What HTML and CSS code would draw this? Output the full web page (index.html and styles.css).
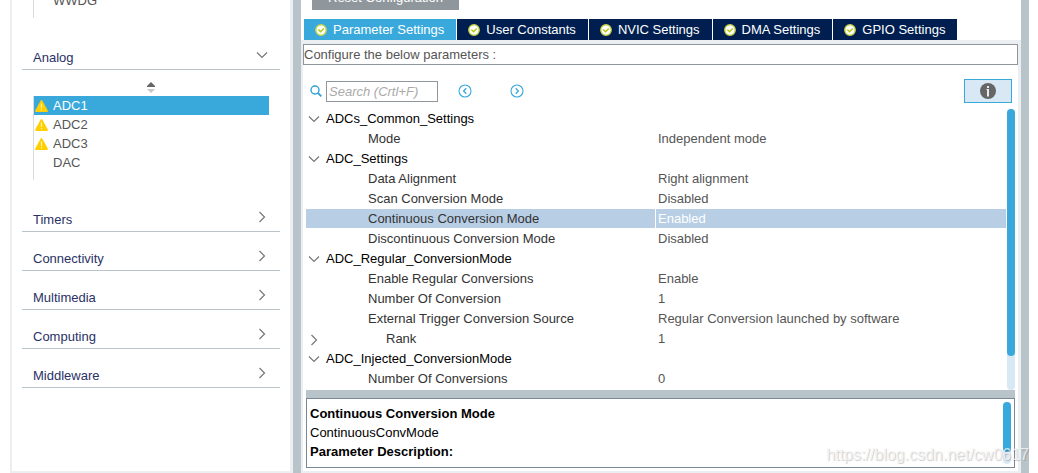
FILE: index.html
```html
<!DOCTYPE html>
<html lang="en">
<head>
<meta charset="utf-8">
<title>ADC1 Configuration</title>
<link rel="stylesheet" href="styles.css">
</head>
<body>
<svg class="defs" aria-hidden="true">
  <symbol id="down" viewBox="0 0 12 8"><path d="M1 1.5 6 6.5 11 1.5" fill="none" stroke="#777" stroke-width="1.2"/></symbol>
  <symbol id="right" viewBox="0 0 8 12"><path d="M1.5 1 6.5 6 1.5 11" fill="none" stroke="#777" stroke-width="1.2"/></symbol>
  <symbol id="check" viewBox="0 0 12 12"><circle cx="6" cy="6" r="5.2" fill="#fff" stroke="#c6d44a" stroke-width="1.4"/><path d="M3.3 5.5 5.6 7.8 8.8 4.6" fill="none" stroke="#b5c80e" stroke-width="1.4"/></symbol>
  <symbol id="warn" viewBox="0 0 13 12"><path d="M6.5 1 12 11H1Z" fill="#ffcf00" stroke="#ffcf00" stroke-width="1.8" stroke-linejoin="round"/><path d="M6.5 3.5V8M6.5 9V10.3" stroke="#fff3b8" stroke-width="1.2"/></symbol>
</svg>
<div class="app">
  <nav class="sidebar">
    <ul class="tree tree-top"><li>WWDG</li></ul>
    <button class="category category-open">Analog<svg width="12" height="8"><use href="#down"/></svg></button>
    <div class="sorter"><svg width="8" height="11" viewBox="0 0 8 11"><path d="M0 4 4 0 8 4V5H0Z" fill="#666"/><path d="M0 7H8L4 11Z" fill="#c8c8c8"/></svg></div>
    <ul class="tree tree-analog">
      <li class="selected"><svg width="13" height="12"><use href="#warn"/></svg>ADC1</li>
      <li><svg width="13" height="12"><use href="#warn"/></svg>ADC2</li>
      <li><svg width="13" height="12"><use href="#warn"/></svg>ADC3</li>
      <li>DAC</li>
    </ul>
    <div class="categories">
      <button class="category">Timers<svg width="8" height="12"><use href="#right"/></svg></button>
      <button class="category">Connectivity<svg width="8" height="12"><use href="#right"/></svg></button>
      <button class="category">Multimedia<svg width="8" height="12"><use href="#right"/></svg></button>
      <button class="category">Computing<svg width="8" height="12"><use href="#right"/></svg></button>
      <button class="category">Middleware<svg width="8" height="12"><use href="#right"/></svg></button>
    </div>
  </nav>
  <div class="divider"></div>
  <main class="main">
    <button class="reset">Reset Configuration</button>
    <div class="tabs" role="tablist">
      <button class="tab active" role="tab" aria-selected="true"><svg width="12" height="12"><use href="#check"/></svg>Parameter Settings</button>
      <button class="tab" role="tab"><svg width="12" height="12"><use href="#check"/></svg>User Constants</button>
      <button class="tab" role="tab"><svg width="12" height="12"><use href="#check"/></svg>NVIC Settings</button>
      <button class="tab" role="tab"><svg width="12" height="12"><use href="#check"/></svg>DMA Settings</button>
      <button class="tab" role="tab"><svg width="12" height="12"><use href="#check"/></svg>GPIO Settings</button>
    </div>
    <section class="panel">
      <div class="hint">Configure the below parameters :</div>
      <div class="toolbar">
        <label class="search" for="search" aria-label="Search"><svg width="12" height="12" viewBox="0 0 12 12" fill="none" stroke="#2fa3d8"><circle cx="5" cy="5" r="4" stroke-width="1.4"/><path d="M8 8 11.3 11.3" stroke-width="1.8"/></svg></label>
        <input id="search" type="text" placeholder="Search (Crtl+F)">
        <button class="nav" aria-label="Previous"><svg width="14" height="14" viewBox="0 0 14 14" fill="none" stroke="#39a9dc"><circle cx="7" cy="7" r="6" stroke-width="1.1"/><path d="M8.3 4.3 5.6 7 8.3 9.7" stroke-width="1.3"/></svg></button>
        <button class="nav" aria-label="Next"><svg width="14" height="14" viewBox="0 0 14 14" fill="none" stroke="#39a9dc"><circle cx="7" cy="7" r="6" stroke-width="1.1"/><path d="M5.7 4.3 8.4 7 5.7 9.7" stroke-width="1.3"/></svg></button>
        <button class="info" aria-label="Information"><svg width="16" height="16" viewBox="0 0 16 16"><circle cx="8" cy="8" r="8" fill="#666"/><path d="M7 3H9V5H7ZM6.5 6H9V13.5H7V7H6.5Z" fill="#e8eef3"/></svg></button>
      </div>
      <div class="params">
        <table>
          <colgroup><col class="name-col"><col></colgroup>
          <tbody>
          <tr class="group"><th colspan="2"><svg width="12" height="8"><use href="#down"/></svg>ADCs_Common_Settings</th></tr>
          <tr><td>Mode</td><td>Independent mode</td></tr>
          <tr class="group"><th colspan="2"><svg width="12" height="8"><use href="#down"/></svg>ADC_Settings</th></tr>
          <tr><td>Data Alignment</td><td>Right alignment</td></tr>
          <tr><td>Scan Conversion Mode</td><td>Disabled</td></tr>
          <tr class="selected"><td>Continuous Conversion Mode</td><td>Enabled</td></tr>
          <tr><td>Discontinuous Conversion Mode</td><td>Disabled</td></tr>
          <tr class="group"><th colspan="2"><svg width="12" height="8"><use href="#down"/></svg>ADC_Regular_ConversionMode</th></tr>
          <tr><td>Enable Regular Conversions</td><td>Enable</td></tr>
          <tr><td>Number Of Conversion</td><td>1</td></tr>
          <tr><td>External Trigger Conversion Source</td><td>Regular Conversion launched by software</td></tr>
          <tr class="nested"><td><svg width="12" height="12"><use href="#right"/></svg>Rank</td><td>1</td></tr>
          <tr class="group"><th colspan="2"><svg width="12" height="8"><use href="#down"/></svg>ADC_Injected_ConversionMode</th></tr>
          <tr><td>Number Of Conversions</td><td>0</td></tr>
          </tbody>
        </table>
        <div class="track"><div class="thumb thumb-params"></div></div>
      </div>
      <div class="splitter"></div>
      <div class="description">
        <div class="description-text"><b>Continuous Conversion Mode</b><br>ContinuousConvMode<br><b>Parameter Description:</b></div>
        <div class="track"><div class="thumb thumb-description"></div></div>
      </div>
    </section>
  </main>
  <div class="divider"></div>
  <div class="watermark">https://blog.csdn.net/cw0617</div>
</div>
</body>
</html>
```
FILE: styles.css
```css
* { box-sizing: border-box; }
body {
  margin: 0;
  background: #fff;
  color: #333;
  font: 13px/19px "Liberation Sans", Arial, sans-serif;
}
button, input { font: inherit; margin: 0; padding: 0; border: 0; border-radius: 0; background: none; }
svg { display: block; flex: none; }
.defs { position: absolute; width: 0; height: 0; }
.app { position: relative; display: flex; height: 100vh; padding: 0 9px 0 10px; overflow: hidden; }
.divider { flex: none; width: 8px; background: #b9c4ca; }

.sidebar {
  flex: none;
  width: 283px;
  padding: 0 10px;
  overflow: hidden;
  border: solid #ebeff2;
  border-width: 0 3px 2px 2px;
}
.tree { list-style: none; margin: 0 11px; padding: 0; border-left: 1px solid #d8dcdf; color: #555; }
.tree li { display: flex; align-items: center; height: 19px; padding-left: 19px; }
.tree li svg { margin: 0 5px 0 -18px; }
.tree .selected { background: #39a9dc; color: #fff; }
.tree-top { height: 27px; margin-top: -9px; }
.tree-analog { height: 84px; }
.category {
  display: flex;
  justify-content: space-between;
  align-items: flex-start;
  width: 100%;
  height: 24px;
  padding: 2px 12px 0 11px;
  border-bottom: 1px solid #b9c4ca;
  color: #2a3166;
}
.category svg { width: 12px; margin-top: 1px; }
.category-open { margin-top: 28px; }
.category-open svg { margin-top: 3px; }
.sorter { display: flex; justify-content: center; height: 26px; padding-top: 12px; }
.categories { display: grid; gap: 15px; padding-top: 28px; }

.main { flex: 1; min-width: 0; display: flex; flex-direction: column; }
.reset { align-self: flex-start; flex: none; height: 26px; margin: -16px 0 9px 11px; padding: 0 16px; background: #90979c; color: #fff; }
.tabs { display: flex; flex: none; gap: 1px; height: 21px; padding-left: 3px; }
.tab { display: flex; align-items: center; gap: 6px; padding: 0 12px 0 11px; background: #001f50; color: #fff; }
.tab.active { background: #39a9dc; }
.panel {
  flex: 1;
  min-height: 0;
  display: flex;
  flex-direction: column;
  border: solid #ebeff2;
  border-width: 4px 3px 2px 2px;
}
.hint { flex: none; height: 21px; border: 1px solid #90979c; color: #555; }
.toolbar { display: flex; flex: none; align-items: center; height: 44px; padding: 8px 6px 0 7px; }
.search { margin-right: 4px; }
#search { width: 112px; height: 21px; padding: 0 2px; border: 1px solid #90979c; margin-right: 20px; }
#search::placeholder { color: #aaa; font-style: italic; opacity: 1; }
.nav { margin-right: 38px; }
.info { display: flex; justify-content: center; align-items: center; width: 48px; height: 24px; margin-left: auto; border: 1px solid #39a9dc; background: #d9e8f5; }
.params { flex: 1; min-height: 0; display: flex; justify-content: space-between; gap: 1px; margin: 0 3px; overflow: hidden; }
table { flex: 1; table-layout: fixed; border-collapse: separate; border-spacing: 0; align-self: flex-start; }
.name-col { width: 50%; }
th, td { height: 20px; padding: 0; text-align: left; font-weight: normal; line-height: 19px; border-bottom: 1px solid #fff; }
th { color: #000; }
td:first-child { padding-left: 62px; border-right: 1px solid #fff; }
td + td { padding-left: 2px; color: #555; }
th svg, .nested svg { display: inline-block; margin: 0 6px 0 2px; }
.nested td:first-child { padding-left: 0; }
.nested svg { margin-right: 66px; vertical-align: middle; }
tr.selected td { background: #b8cee5; }
tr.selected td + td { color: #fff; }
.track { flex: none; width: 8px; border-radius: 4px; background: #d9e8f5; }
.thumb { border-radius: 4px; background: #39a9dc; }
.thumb-params { height: 88%; }
.thumb-description { height: 80%; }
.splitter { flex: none; height: 8px; margin: 0 3px; background: #b9c4ca; }
.description { display: flex; flex: none; justify-content: space-between; height: 70px; margin: 0 3px 3px; padding: 3px; border: 1px solid #788995; color: #000; }
.description-text { padding-top: 2px; }
.watermark { position: absolute; right: 9px; bottom: 9px; color: rgba(244, 244, 244, .85); font-size: 16px; text-shadow: 1px 1px 1px rgba(0, 0, 0, .2); pointer-events: none; }
```
